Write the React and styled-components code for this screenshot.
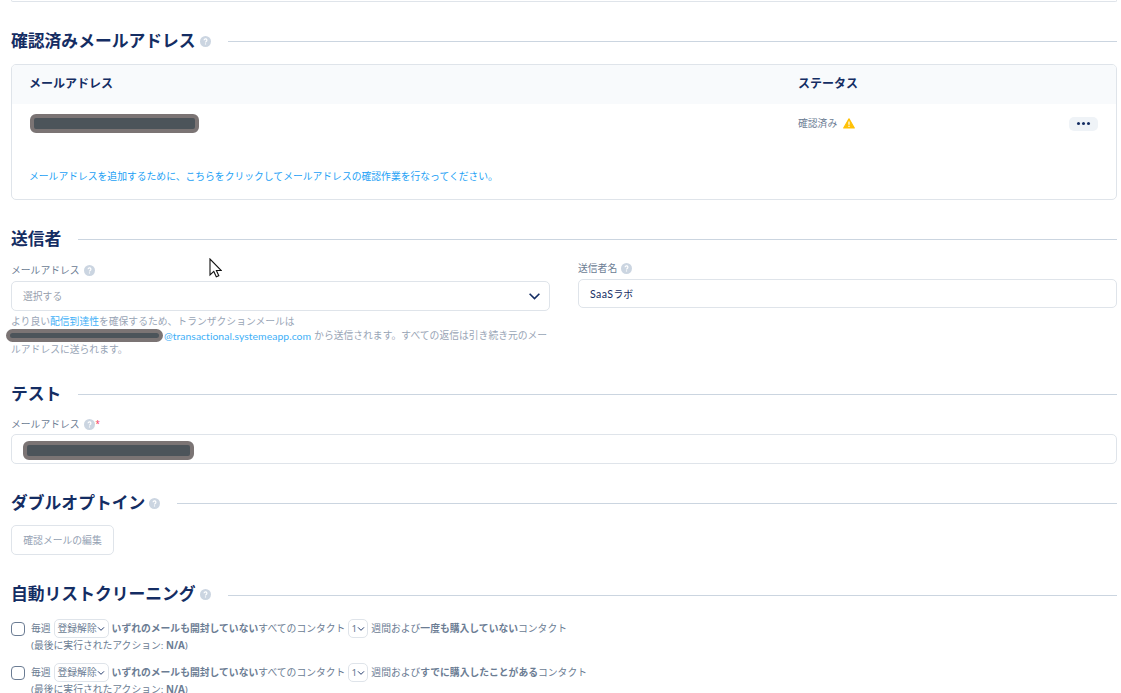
import React from 'react';
import styled, { createGlobalStyle } from 'styled-components';

const GlobalStyle = createGlobalStyle`
    * {
        box-sizing: border-box;
    }
    html, body {
        margin: 0;
        height: 693px;
        overflow: hidden;
        background: #fff;
    }
    body {
        font-family: "Noto Sans", "Noto Sans CJK JP", sans-serif;
        font-size: 9.8px;
        color: #6b7c93;
    }
`;

const rules = [
  { id: 1, bought: '一度も購入していない' },
  { id: 2, bought: 'すでに購入したことがある' },
];

function Help() {
  return (
    <HelpIcon viewBox="0 0 11 11">
      <circle cx="5.5" cy="5.5" r="5.5" fill="#cbd5e1" />
      <path d="M4.1 4.3a1.4 1.4 0 1 1 2.1 1.2c-.5.3-.7.5-.7.9" fill="none" stroke="#fff" strokeWidth="1.2" />
      <circle cx="5.5" cy="7.9" r=".7" fill="#fff" />
    </HelpIcon>
  );
}

function Chevron({ size, weight }) {
  return (
    <ChevronIcon viewBox="0 0 12 12" $size={size}>
      <path d="M1.5 3.5 6 8l4.5-4.5" fill="none" stroke="#142d63" strokeWidth={weight} />
    </ChevronIcon>
  );
}

function Heading({ title, help, drop }) {
  return (
    <HeadingRow>
      <Title>{title}</Title>
      {help && <Help />}
      <Rule $drop={drop} />
    </HeadingRow>
  );
}

function CleaningRule({ bought }) {
  return (
    <RuleRow>
      <Checkbox />
      <div>
        <RuleLine>
          <Text $end="3px">毎週</Text>
          <MiniSelect $width="55px">登録解除<Chevron size="8px" weight="1.4" /></MiniSelect>
          <Text $start="3px" $end="3px"><b>いずれのメールも開封していない</b>すべてのコンタクト</Text>
          <MiniSelect $width="20px">1<Chevron size="8px" weight="1.4" /></MiniSelect>
          <Text $start="3px">週間および<b>{bought}</b>コンタクト</Text>
        </RuleLine>
        <LastRun>(最後に実行されたアクション: <b>N/A</b>)</LastRun>
      </div>
    </RuleRow>
  );
}

export default function App() {
  return (
    <Page>
      <GlobalStyle />
      <PreviousCard />

      <Section $top="28px">
        <Heading title="確認済みメールアドレス" help />
        <Table>
          <TableHead>
            <span>メールアドレス</span>
            <span>ステータス</span>
          </TableHead>
          <TableRow>
            <Redacted $width="169px" />
            <Status>
              確認済み
              <WarningIcon viewBox="0 0 12 11">
                <path d="M6 .8 11.3 10H.7z" fill="#ffc107" stroke="#ffc107" strokeWidth="1.2" strokeLinejoin="round" />
                <path d="M6 3.6v3.2M6 7.8v1.2" stroke="#fff" strokeWidth="1.2" />
              </WarningIcon>
            </Status>
            <MoreButton><Dot /><Dot /><Dot /></MoreButton>
          </TableRow>
          <AddLink>メールアドレスを追加するために、こちらをクリックしてメールアドレスの確認作業を行なってください。</AddLink>
        </Table>
      </Section>

      <Section $top="28px">
        <Heading title="送信者" />
        <Fields>
          <Field $top="12px">
            <Label>メールアドレス<Help /></Label>
            <Input $height="30px" $placeholder>
              選択する
              <Chevron size="13px" weight="1.5" />
            </Input>
            <Hint>
              <div>より良い<a>配信到達性</a>を確保するため、トランザクションメールは</div>
              <HintLine>
                <HintMask />
                <Address>@transactional.systemeapp.com</Address>
                <span>から送信されます。すべての返信は引き続き元のメー</span>
              </HintLine>
              <div>ルアドレスに送られます。</div>
            </Hint>
          </Field>
          <Field $top="10px">
            <Label>送信者名<Help /></Label>
            <Input $height="29px"><Latin>SaaS</Latin>ラボ</Input>
          </Field>
        </Fields>
      </Section>

      <Section $top="24px">
        <Heading title="テスト" />
        <Field $top="11px">
          <Label $tight>メールアドレス<Help /><Required>*</Required></Label>
          <Input $height="30px" $low><Redacted $width="171px" /></Input>
        </Field>
      </Section>

      <Section $top="28px">
        <Heading title="ダブルオプトイン" help />
        <EditButton>確認メールの編集</EditButton>
      </Section>

      <Section $top="28px">
        <Heading title="自動リストクリーニング" help drop />
        <Rules>
          {rules.map(rule => <CleaningRule key={rule.id} bought={rule.bought} />)}
        </Rules>
      </Section>

      <Cursor viewBox="0 0 13 20">
        <path d="M1 1v16l3.8-3.6 2.5 5.4 2.5-1.1-2.4-5.2h4.9z" fill="#fff" stroke="#111" strokeWidth="1.1" />
      </Cursor>
    </Page>
  );
}

const Page = styled.div`
    position: relative;
    height: 693px;
    overflow: hidden;
    padding: 0 4px 0 11px;
`;

const PreviousCard = styled.div`
    height: 2px;
    border: 1px solid #dfe4ea;
    border-top: none;
    border-radius: 0 0 5px 5px;
`;

const Section = styled.section`
    padding-top: ${props => props.$top};
`;

const HeadingRow = styled.div`
    display: flex;
    align-items: center;
    height: 22px;
`;

const Title = styled.h2`
    margin: 0 4px 0 0;
    font-size: 16.8px;
    line-height: 22px;
    font-weight: 700;
    color: #142d63;
    white-space: nowrap;
`;

const Rule = styled.div`
    flex: 1;
    height: 1px;
    margin: ${props => props.$drop ? '3px' : '1px'} 0 0 13px;
    background: #cbd5e0;
`;

const HelpIcon = styled.svg`
    flex: none;
    width: 11px;
    height: 11px;
    margin: 1px 4px 0 0;
`;

const ChevronIcon = styled.svg`
    flex: none;
    width: ${props => props.$size};
    height: ${props => props.$size};
`;

const Table = styled.div`
    height: 136px;
    margin-top: 12px;
    border: 1px solid #dfe4ea;
    border-radius: 5px;
    overflow: hidden;
`;

const TableHead = styled.div`
    display: grid;
    grid-template-columns: 769px 1fr;
    align-items: center;
    height: 39px;
    padding: 0 17px 2px;
    background: #f8fafc;
    font-size: 12px;
    line-height: 17px;
    font-weight: 700;
    color: #142d63;
`;

const TableRow = styled.div`
    display: grid;
    grid-template-columns: 768px 1fr auto;
    align-items: center;
    height: 39px;
    padding: 0 18px;
`;

const Redacted = styled.div`
    width: ${props => props.$width};
    height: 19px;
    border: 4px solid #7b7474;
    border-radius: 6px;
    background: #4c545a;
`;

const Status = styled.div`
    display: flex;
    align-items: center;
    line-height: 14px;
`;

const WarningIcon = styled.svg`
    width: 12px;
    height: 11px;
    margin: 0 0 1px 6px;
`;

const MoreButton = styled.div`
    display: flex;
    align-items: center;
    justify-content: center;
    gap: 2px;
    width: 29px;
    height: 14px;
    border-radius: 5px;
    background: #eff3f7;
`;

const Dot = styled.i`
    width: 3px;
    height: 3px;
    border-radius: 50%;
    background: #142d63;
`;

const AddLink = styled.div`
    padding: 27px 17px 0;
    line-height: 14px;
    color: #1c9ff5;
`;

const Fields = styled.div`
    display: grid;
    grid-template-columns: 539px 539px;
    gap: 28px;
    height: 109px;
`;

const Field = styled.div`
    padding-top: ${props => props.$top};
`;

const Label = styled.div`
    display: flex;
    align-items: center;
    height: ${props => props.$tight ? '18px' : '19px'};
    padding-bottom: ${props => props.$tight ? '2px' : '3px'};

    ${HelpIcon} {
        margin: 1px 1px 0 4px;
    }
`;

const Required = styled.span`
    color: #f5365c;
    font-size: 8px;
    line-height: 14px;
`;

const Input = styled.div`
    display: flex;
    align-items: center;
    justify-content: ${props => props.$placeholder ? 'space-between' : 'flex-start'};
    height: ${props => props.$height};
    padding: ${props => props.$low ? '2px' : 0} 8px 0 11px;
    border: 1px solid #dfe4ea;
    border-radius: 5px;
    color: ${props => props.$placeholder ? '#97a0ad' : '#142d63'};
`;

const Latin = styled.span`
    font-family: Lato, sans-serif;
    font-size: 10.6px;
    letter-spacing: 0.4px;
`;

const Hint = styled.div`
    padding-top: 4px;
    line-height: 14px;
    color: #99a5b6;

    a {
        color: #41b0f7;
    }
`;

const HintLine = styled.div`
    display: flex;
    align-items: flex-start;
    height: 14px;
    white-space: nowrap;
`;

const HintMask = styled.span`
    flex: none;
    width: 157px;
    height: 13px;
    margin: 0 1px 0 -5px;
    border: 4px solid #7b7474;
    border-radius: 7px;
    background: #4c545a;
`;

const Address = styled.span`
    margin-right: 3px;
    font-family: Lato, sans-serif;
    font-size: 10.4px;
    letter-spacing: 0.05px;
    color: #41b0f7;
`;

const EditButton = styled.div`
    display: flex;
    align-items: center;
    justify-content: center;
    width: 103px;
    height: 30px;
    margin-top: 11px;
    border: 1px solid #dfe4ea;
    border-radius: 5px;
    color: #94a1b3;
`;

const Rules = styled.div`
    padding-top: 14px;
`;

const RuleRow = styled.div`
    display: flex;
    align-items: flex-start;
    height: 44px;
`;

const Checkbox = styled.div`
    width: 14px;
    height: 14px;
    margin: 3px 6px 0 0;
    border: 1px solid #6b7c93;
    border-radius: 4px;
`;

const RuleLine = styled.div`
    display: flex;
    align-items: center;
    height: 19px;
    line-height: 14px;
    white-space: nowrap;
`;

const Text = styled.span`
    margin-left: ${props => props.$start || 0};
    margin-right: ${props => props.$end || 0};
    padding-top: 1px;
`;

const MiniSelect = styled.span`
    display: flex;
    align-items: center;
    justify-content: center;
    width: ${props => props.$width};
    height: 19px;
    padding-top: 1px;
    border: 1px solid #dfe4ea;
    border-radius: 5px;
`;

const LastRun = styled.div`
    padding-top: 1px;
    line-height: 14px;
`;

const Cursor = styled.svg`
    position: absolute;
    left: 209px;
    top: 258px;
    width: 13px;
    height: 20px;
`;
